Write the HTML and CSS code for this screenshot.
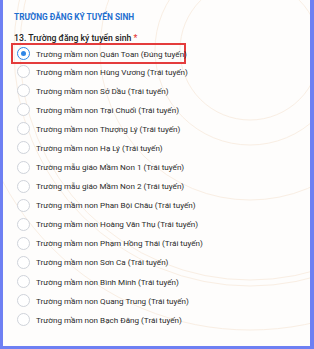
FILE: index.html
```html
<!DOCTYPE html>
<html lang="vi">
<head>
    <meta charset="UTF-8">
    <meta name="viewport" content="width=device-width, initial-scale=1.0">
    <title>Trường đăng ký tuyển sinh</title>
    <link rel="stylesheet" href="styles.css">
</head>
<body>
    <div class="frame">
        <!-- faint drum pattern in the background -->
        <svg class="pattern" width="314" height="349" viewBox="0 0 314 349">
            <g fill="none" stroke="#f9eee3" stroke-width="1">
                <circle cx="250" cy="50" r="70"/>
                <circle cx="250" cy="50" r="95"/>
                <circle cx="250" cy="50" r="150"/>
                <circle cx="250" cy="50" r="230"/>
                <circle cx="250" cy="50" r="236"/>
                <circle cx="250" cy="50" r="280"/>
            </g>
        </svg>

        <div class="content">
            <h2 class="section-title">TRƯỜNG ĐĂNG KÝ TUYỂN SINH</h2>
            <div class="question">13. Trường đăng ký tuyển sinh <span class="req">*</span></div>

            <div class="options">
                <label class="option selected"><span class="radio checked"></span>Trường mầm non Quán Toan (Đúng tuyến)</label>
                <label class="option"><span class="radio"></span>Trường mầm non Hùng Vương (Trái tuyến)</label>
                <label class="option"><span class="radio"></span>Trường mầm non Sở Dầu (Trái tuyến)</label>
                <label class="option"><span class="radio"></span>Trường mầm non Trại Chuối (Trái tuyến)</label>
                <label class="option"><span class="radio"></span>Trường mầm non Thượng Lý (Trái tuyến)</label>
                <label class="option"><span class="radio"></span>Trường mầm non Hạ Lý (Trái tuyến)</label>
                <label class="option"><span class="radio"></span>Trường mẫu giáo Mầm Non 1 (Trái tuyến)</label>
                <label class="option"><span class="radio"></span>Trường mẫu giáo Mầm Non 2 (Trái tuyến)</label>
                <label class="option"><span class="radio"></span>Trường mầm non Phan Bội Châu (Trái tuyến)</label>
                <label class="option"><span class="radio"></span>Trường mầm non Hoàng Văn Thụ (Trái tuyến)</label>
                <label class="option"><span class="radio"></span>Trường mầm non Phạm Hồng Thái (Trái tuyến)</label>
                <label class="option"><span class="radio"></span>Trường mầm non Sơn Ca (Trái tuyến)</label>
                <label class="option"><span class="radio"></span>Trường mầm non Bình Minh (Trái tuyến)</label>
                <label class="option"><span class="radio"></span>Trường mầm non Quang Trung (Trái tuyến)</label>
                <label class="option"><span class="radio"></span>Trường mầm non Bạch Đằng (Trái tuyến)</label>
            </div>
        </div>
    </div>
</body>
</html>
```

FILE: styles.css
```css
* {
    margin: 0;
    padding: 0;
    box-sizing: border-box;
}
body {
    font-family: Roboto, "Noto Sans", sans-serif;
    background: #fff;
    color: #222;
}
.frame {
    position: relative;
    width: 314px;
    height: 349px;
    background: #fefdfc;
    border-left: 3px solid #6e80f3;
    border-right: 4px solid #6e80f3;
    border-bottom: 3px solid #6e80f3;
    overflow: hidden;
}
.pattern {
    position: absolute;
    top: 0;
    left: -3px;
}
.content {
    position: relative;
    padding: 12px 0 0 11px;
}
.section-title {
    font-size: 8.3px;
    font-weight: bold;
    color: #1f6fd0;
    line-height: 11px;
}
.question {
    margin-top: 9px;
    font-size: 8.7px;
    font-weight: 500;
    color: #222;
    line-height: 12px;
}
.req {
    color: #e53935;
}
.options {
    display: flex;
    flex-direction: column;
    margin-top: -1px;
}
.option {
    display: flex;
    align-items: center;
    gap: 6px;
    height: 19.1px;
    padding-left: 3px;
    font-size: 8.1px;
    color: #2a2a2a;
    white-space: nowrap;
}
.option.selected {
    width: 175px;
    margin-left: -3px;
    padding-left: 4px;
    border: 2px solid #e43c3c;
    height: 21px;
    margin-bottom: -2px;
}
.radio {
    width: 13px;
    height: 13px;
    border: 1px solid #cfd3da;
    border-radius: 50%;
    background: #fff;
    flex-shrink: 0;
    display: flex;
    align-items: center;
    justify-content: center;
}
.radio.checked {
    border-color: #2f86e6;
}
.radio.checked::after {
    content: "";
    width: 5px;
    height: 5px;
    border-radius: 50%;
    background: #2f86e6;
}
```
